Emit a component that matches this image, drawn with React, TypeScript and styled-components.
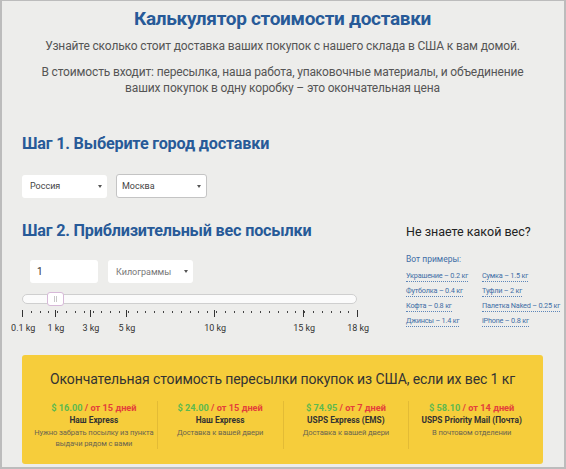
import styled, { createGlobalStyle } from "styled-components";

const GlobalStyle = createGlobalStyle`
  html, body {
    margin: 0;
    padding: 0;
  }
  body {
    font-family: Roboto, "Liberation Sans", sans-serif;
    background: #ededeb;
  }
`;

interface ITick {
  at: number;
  label?: string;
}

// positions along the track, px from the left edge of the scale
const majorTicks: ITick[] = [
  { at: 0, label: "0.1 kg" },
  { at: 33, label: "1 kg" },
  { at: 68, label: "3 kg" },
  { at: 104, label: "5 kg" },
  { at: 192, label: "10 kg" },
  { at: 281, label: "15 kg" },
  { at: 335, label: "18 kg" },
];

const minorTicks = Array.from({ length: 38 }, (_, i) => Math.round(i * 8.82));

const examples = [
  ["Украшение – 0.2 кг", "Сумка – 1.5 кг"],
  ["Футболка – 0.4 кг", "Туфли – 2 кг"],
  ["Кофта – 0.8 кг", "Палетка Naked – 0.25 кг"],
  ["Джинсы – 1.4 кг", "iPhone – 0.8 кг"],
];

const services = [
  {
    price: "$ 16.00",
    days: "от 15 дней",
    name: "Наш Express",
    note: "Нужно забрать посылку из пункта\nвыдачи рядом с вами",
  },
  { price: "$ 24.00", days: "от 15 дней", name: "Наш Express", note: "Доставка к вашей двери" },
  { price: "$ 74.95", days: "от 7 дней", name: "USPS Express (EMS)", note: "Доставка к вашей двери" },
  { price: "$ 58.10", days: "от 14 дней", name: "USPS Priority Mail (Почта)", note: "В почтовом отделении" },
];

export default function App() {
  return (
    <>
      <GlobalStyle />
      <Frame>
        <Header>
          <Title>Калькулятор стоимости доставки</Title>
          <Lead>Узнайте сколько стоит доставка ваших покупок с нашего склада в США к вам домой.</Lead>
          <Lead>
            В стоимость входит: пересылка, наша работа, упаковочные материалы, и объединение
            <br />
            ваших покупок в одну коробку – это окончательная цена
          </Lead>
        </Header>

        <StepTitle $top={37}>Шаг 1. Выберите город доставки</StepTitle>
        <Row>
          <Select $width={85}>
            <span>Россия</span>
            <Caret />
          </Select>
          <Select $width={91} $bordered>
            <span>Москва</span>
            <Caret />
          </Select>
        </Row>

        <StepTwo>
          <WeightColumn>
            <StepTitle $top={0}>Шаг 2. Приблизительный вес посылки</StepTitle>
            <InputRow>
              <NumberBox>1</NumberBox>
              <Select $width={85} $muted>
                <span>Килограммы</span>
                <Caret />
              </Select>
            </InputRow>
            <Track>
              <Handle>
                <Grip />
                <Grip />
              </Handle>
            </Track>
            <Scale>
              {minorTicks.map((x) => (
                <MinorTick key={x} style={{ left: x }} />
              ))}
              {majorTicks.map((t) => (
                <MajorTick key={t.at} style={{ left: t.at }}>
                  <TickLabel>{t.label}</TickLabel>
                </MajorTick>
              ))}
            </Scale>
          </WeightColumn>

          <Aside>
            <AsideTitle>Не знаете какой вес?</AsideTitle>
            <AsideHint>Вот примеры:</AsideHint>
            <ExampleGrid>
              {examples.flat().map((e) => (
                <Example key={e}>{e}</Example>
              ))}
            </ExampleGrid>
          </Aside>
        </StepTwo>

        <Result>
          <ResultTitle>Окончательная стоимость пересылки покупок из США, если их вес 1 кг</ResultTitle>
          <Services>
            {services.map((s, i) => (
              <Service key={i}>
                <Price>
                  <Money>{s.price}</Money>
                  <Days> / {s.days}</Days>
                </Price>
                <ServiceName>{s.name}</ServiceName>
                <ServiceNote>{s.note}</ServiceNote>
              </Service>
            ))}
          </Services>
        </Result>
      </Frame>
    </>
  );
}

const Frame = styled.div`
  box-sizing: border-box;
  height: 469px;
  border: 2px solid #bcbcbc;
  border-top-width: 1px;
  padding: 0 21px 0 20px;
  background: #ededeb;
  overflow: hidden;
`;

const Header = styled.div`
  display: flex;
  flex-direction: column;
  align-items: center;
  text-align: center;
`;

const Title = styled.h1`
  margin: 6px 0 0;
  font-size: 19px;
  line-height: 24px;
  font-weight: 700;
  letter-spacing: -0.3px;
  color: #275a98;
`;

const Lead = styled.p`
  margin: 7px 0 0;
  font-size: 12px;
  line-height: 16px;
  color: #555;
  letter-spacing: -0.15px;

  & + & {
    margin-top: 10px;
  }
`;

const StepTitle = styled.h2<{ $top: number }>`
  margin: ${(p) => p.$top}px 0 0;
  font-size: 16.2px;
  line-height: 22px;
  font-weight: 700;
  letter-spacing: -0.2px;
  color: #275a98;
`;

const Row = styled.div`
  display: flex;
  gap: 9px;
  margin-top: 19px;
  align-items: center;
`;

const Select = styled.div<{ $width: number; $bordered?: boolean; $muted?: boolean }>`
  box-sizing: border-box;
  width: ${(p) => p.$width}px;
  height: ${(p) => (p.$bordered ? 24 : 23)}px;
  display: flex;
  align-items: center;
  justify-content: space-between;
  padding: 0 5px 0 ${(p) => (p.$bordered ? 5 : 8)}px;
  background: #fff;
  border-radius: 3px;
  border: ${(p) => (p.$bordered ? "1px solid #c4c4c4" : "none")};
  font-size: 9px;
  color: ${(p) => (p.$muted ? "#777" : "#444")};
`;

const Caret = styled.span`
  width: 0;
  height: 0;
  border-left: 2px solid transparent;
  border-right: 2px solid transparent;
  border-top: 3px solid #555;
`;

const StepTwo = styled.div`
  display: grid;
  grid-template-columns: 335px 1fr;
  column-gap: 49px;
  margin-top: 22px;
`;

const WeightColumn = styled.div`
  display: flex;
  flex-direction: column;
`;

const InputRow = styled.div`
  display: flex;
  gap: 10px;
  margin: 18px 0 0 8px;
`;

const NumberBox = styled.div`
  box-sizing: border-box;
  width: 68px;
  height: 23px;
  display: flex;
  align-items: center;
  padding-left: 7px;
  background: #fff;
  border-radius: 3px;
  font-size: 10px;
  color: #333;
`;

const Track = styled.div`
  position: relative;
  box-sizing: border-box;
  height: 10px;
  margin-top: 11px;
  background: #fbfbfb;
  border: 1px solid #cfcfcf;
  border-radius: 5px;
`;

const Handle = styled.div`
  position: absolute;
  left: 24px;
  top: -3px;
  box-sizing: border-box;
  width: 17px;
  height: 14px;
  display: flex;
  justify-content: center;
  align-items: center;
  gap: 1px;
  background: #fff;
  border: 1px solid #d7b9d8;
  border-radius: 3px;
`;

const Grip = styled.span`
  width: 1px;
  height: 6px;
  background: #c8c8c8;
`;

const Scale = styled.div`
  position: relative;
  height: 32px;
  margin-top: 5px;
`;

const MinorTick = styled.span`
  position: absolute;
  top: 2px;
  width: 1px;
  height: 2px;
  background: #444;
`;

const MajorTick = styled.span`
  position: absolute;
  top: 1px;
  width: 1px;
  height: 7px;
  background: #333;
`;

const TickLabel = styled.span`
  position: absolute;
  top: 13px;
  left: 0;
  transform: translateX(-45%);
  white-space: nowrap;
  font-size: 9px;
  color: #333;
`;

const Aside = styled.div`
  display: flex;
  flex-direction: column;
  padding-top: 3px;
`;

const AsideTitle = styled.div`
  font-size: 12.5px;
  line-height: 18px;
  color: #222;
`;

const AsideHint = styled.div`
  margin-top: 13px;
  font-size: 8.5px;
  color: #3f6ea6;
`;

const ExampleGrid = styled.div`
  display: grid;
  grid-template-columns: 76px auto;
  row-gap: 3px;
  margin-top: 6px;
`;

const Example = styled.span`
  justify-self: start;
  font-size: 7.3px;
  line-height: 11px;
  letter-spacing: -0.2px;
  color: #3f6ea6;
  border-bottom: 1px dotted #5d86b8;
  white-space: nowrap;
`;

const Result = styled.div`
  margin-top: 14px;
  padding: 14px 9px 15px;
  background: #f6cd3b;
  border-radius: 3px;
`;

const ResultTitle = styled.div`
  text-align: center;
  font-size: 14px;
  line-height: 20px;
  letter-spacing: -0.1px;
  white-space: nowrap;
  color: #333;
`;

const Services = styled.div`
  display: grid;
  grid-template-columns: repeat(4, 1fr);
  margin-top: 12px;
`;

const Service = styled.div`
  display: flex;
  flex-direction: column;
  align-items: center;
  text-align: center;
  padding: 0 1px;

  & + & {
    border-left: 1px solid #e3bb35;
  }
`;

const Price = styled.div`
  font-size: 9.2px;
  line-height: 13px;
  font-weight: 700;
`;

const Money = styled.span`
  color: #5db94e;
`;

const Days = styled.span`
  color: #e4403a;
`;

const ServiceName = styled.div`
  font-size: 8.3px;
  line-height: 13px;
  font-weight: 700;
  color: #333;
`;

const ServiceNote = styled.div`
  font-size: 7.6px;
  line-height: 11px;
  letter-spacing: -0.1px;
  white-space: pre;
  color: #6a6450;
`;
